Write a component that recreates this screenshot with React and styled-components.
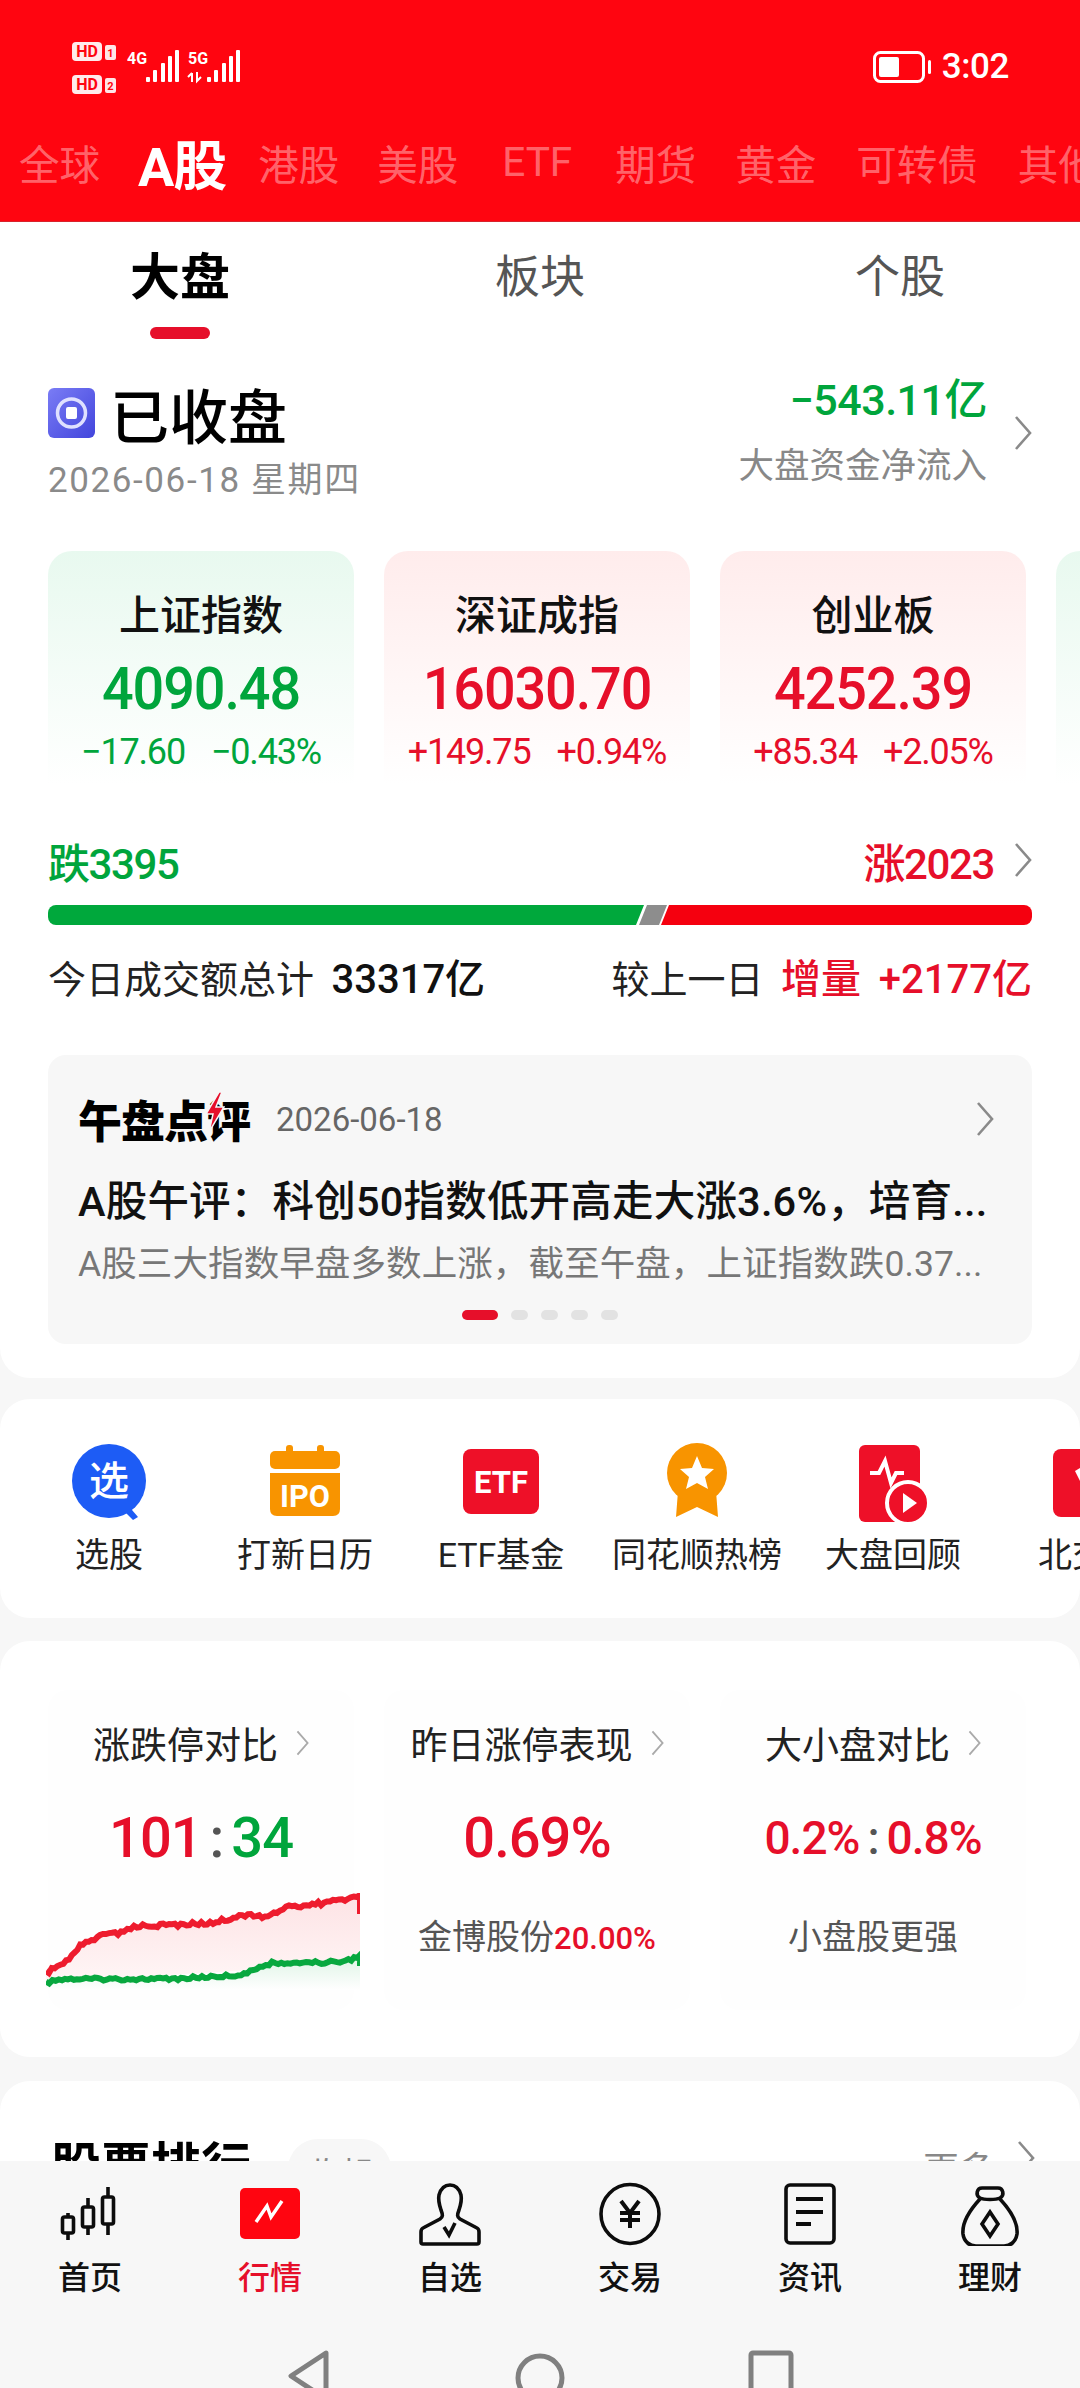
import React from "react";
import styled, { createGlobalStyle } from "styled-components";

const RED = "#e60f2a";
const GREEN = "#00a53c";
const BRIGHT = "#ff0510";
const BG = "#f7f7f7";

const GlobalStyle = createGlobalStyle`
  html, body {
    margin: 0;
    padding: 0;
    background: ${BG};
  }
  * {
    box-sizing: border-box;
  }
  body {
    font-family: Roboto, "Noto Sans CJK SC", sans-serif;
    color: #111;
  }
`;

const Page = styled.div`
  width: 1080px;
  height: 2388px;
  display: flex;
  flex-direction: column;
  overflow: hidden;
  background: ${BG};
`;
const Header = styled.header`
  height: 222px;
  flex: none;
  background: ${BRIGHT};
  border-bottom: 1px solid #d8232c;
  color: #fff;
`;
const StatusBar = styled.div`
  height: 122px;
  padding: 36px 71px 0 70px;
  display: flex;
  justify-content: space-between;
  align-items: flex-start;
`;
const StatusRight = styled.div`
  display: flex;
  align-items: center;
  gap: 9px;
  margin-top: 12px;
`;
const Clock = styled.span`
  font-size: 35px;
  line-height: 38px;
  font-weight: 500;
  letter-spacing: -0.4px;
`;
const MarketTabs = styled.nav`
  height: 80px;
  padding-left: 19px;
  display: flex;
  align-items: center;
  white-space: nowrap;
  overflow: hidden;
`;
const MarketTab = styled.span`
  flex: none;
  margin-right: ${(p) => p.$gap}px;
  font-size: ${(p) => (p.$active ? "54px" : "40.5px")};
  font-weight: ${(p) => (p.$active ? 700 : 400)};
  letter-spacing: ${(p) => (p.$active ? "-1px" : "0")};
  color: ${(p) => (p.$active ? "#fff" : "rgba(255,255,255,0.4)")};
`;

const Scroll = styled.main`
  flex: 1;
  min-height: 0;
  overflow: hidden;
`;
const Panel = styled.section`
  background: #fff;
  border-radius: ${(p) => (p.$top ? "0 0 30px 30px" : "30px")};
  margin-bottom: ${(p) => p.$after || 0}px;
  overflow: hidden;
`;
const SubTabs = styled.div`
  display: flex;
`;
const SubTab = styled.div`
  flex: 1;
  height: 117px;
  padding-top: 31px;
  display: flex;
  flex-direction: column;
  align-items: center;
  font-size: ${(p) => (p.$active ? "50px" : "45px")};
  line-height: 50px;
  font-weight: ${(p) => (p.$active ? 700 : 400)};
  color: ${(p) => (p.$active ? "#000" : "#555")};
`;
const SubMark = styled.i`
  width: 60px;
  height: 12px;
  margin-top: 24px;
  border-radius: 6px;
  background: ${RED};
`;
const Summary = styled.div`
  margin-top: 36px;
  padding: 0 48px;
  display: flex;
  justify-content: space-between;
  align-items: flex-start;
`;
const SummaryLeft = styled.div`
  display: flex;
  flex-direction: column;
`;
const ClosedRow = styled.div`
  height: 76px;
  display: flex;
  align-items: center;
  gap: 15px;
  font-size: 59px;
  font-weight: 500;
  color: #000;
`;
const DateLine = styled.div`
  height: 60px;
  line-height: 60px;
  font-size: 35px;
  letter-spacing: 1.6px;
  color: #8a8a8a;
`;
const SummaryRight = styled.div`
  display: flex;
  align-items: center;
  gap: 27px;
`;
const FlowTexts = styled.div`
  text-align: right;
  height: 116px;
`;
const FlowValue = styled.div`
  font-size: 43px;
  line-height: 50px;
  font-weight: 500;
  letter-spacing: -0.5px;
  color: ${GREEN};
`;
const FlowLabel = styled.div`
  margin-top: 16px;
  font-size: 35.5px;
  line-height: 50px;
  color: #888;
`;
const Chevron = styled.svg`
  flex: none;
  display: block;
  fill: none;
  stroke: ${(p) => p.$color || "#8a8a8a"};
  stroke-width: 2.6;
`;
const CardRow = styled.div`
  margin-top: 40px;
  padding-left: 48px;
  display: flex;
  gap: 30px;
  overflow: hidden;
`;
const IndexCard = styled.div`
  flex: none;
  width: 306px;
  height: 249px;
  padding-top: 40px;
  border-radius: 24px 24px 0 0;
  text-align: center;
  background: linear-gradient(
    ${(p) => (p.$up ? "#ffecec" : "#e8f9ef")} 0%,
    #ffffff 94%
  );
`;
const IndexName = styled.div`
  font-size: 41px;
  line-height: 50px;
  font-weight: 500;
  color: #111;
`;
const IndexValue = styled.div`
  margin-top: 13px;
  font-size: 60px;
  line-height: 70px;
  font-weight: 500;
  letter-spacing: -1.2px;
  transform: scaleX(0.93);
  color: ${(p) => (p.$up ? RED : GREEN)};
`;
const IndexChange = styled.div`
  margin-top: 8px;
  display: flex;
  justify-content: center;
  gap: 26px;
  font-size: 36px;
  line-height: 40px;
  letter-spacing: -1.2px;
  color: ${(p) => (p.$up ? RED : GREEN)};
`;
const Breadth = styled.div`
  margin-top: 35px;
  padding: 0 48px;
  height: 50px;
  display: flex;
  justify-content: space-between;
  align-items: center;
  font-size: 42px;
  font-weight: 500;
  letter-spacing: -1.4px;
`;
const BreadthRight = styled.div`
  display: flex;
  align-items: center;
  gap: 20px;
`;
const Tone = styled.span`
  color: ${(p) => (p.$up ? RED : GREEN)};
`;
const Bar = styled.div`
  margin: 20px 48px 0;
  height: 20px;
  display: flex;
`;
const BarFall = styled.div`
  width: 596px;
  background: #00a83c;
  border-radius: 8px 0 0 8px;
  clip-path: polygon(0 0, 100% 0, calc(100% - 8px) 100%, 0 100%);
`;
const BarFlat = styled.div`
  width: 28px;
  margin-left: -5px;
  background: #8d8d8d;
  clip-path: polygon(8px 0, 100% 0, calc(100% - 8px) 100%, 0 100%);
`;
const BarRise = styled.div`
  flex: 1;
  margin-left: -6px;
  background: #f5000f;
  border-radius: 0 8px 8px 0;
  clip-path: polygon(8px 0, 100% 0, 100% 100%, 0 100%);
`;
const Turnover = styled.div`
  margin-top: 26px;
  padding: 0 48px;
  height: 50px;
  display: flex;
  justify-content: space-between;
  align-items: center;
  font-size: 38px;
  word-spacing: 8px;
  color: #222;
  white-space: nowrap;
`;
const Strong = styled.b`
  font-size: 40px;
  font-weight: 500;
  color: ${(p) => (p.$up ? RED : "#111")};
`;
const NewsCard = styled.div`
  margin: 54px 48px 34px;
  height: 289px;
  padding: 40px 38px 0 30px;
  border-radius: 18px;
  background: ${BG};
`;
const NewsTop = styled.div`
  height: 48px;
  display: flex;
  align-items: center;
`;
const NewsLogo = styled.span`
  position: relative;
  font-size: 44px;
  font-weight: 900;
  letter-spacing: -1px;
  color: #000;
`;
const Bolt = styled.svg`
  position: absolute;
  left: 127px;
  top: 5px;
`;
const NewsDate = styled.span`
  margin-left: 26px;
  font-size: 33px;
  color: #666;
  flex: 1;
`;
const NewsTitle = styled.div`
  margin-top: 31px;
  font-size: 41.5px;
  line-height: 56px;
  font-weight: 500;
  color: #111;
  white-space: nowrap;
  letter-spacing: 0.2px;
`;
const NewsBody = styled.div`
  margin-top: 9px;
  font-size: 35.5px;
  line-height: 50px;
  letter-spacing: 0.1px;
  color: #777;
  white-space: nowrap;
`;
const Dots = styled.div`
  margin-top: 21px;
  display: flex;
  justify-content: center;
  gap: 13px;
  padding-left: 8px;
`;
const Dot = styled.i`
  width: ${(p) => (p.$on ? "36px" : "17px")};
  height: 10px;
  border-radius: 5px;
  background: ${(p) => (p.$on ? RED : "#e2e2e2")};
`;
const ShortcutPanel = styled(Panel)`
  height: 219px;
  padding: 44px 0 0 11px;
  display: flex;
`;
const Shortcut = styled.div`
  flex: none;
  width: 196px;
  display: flex;
  flex-direction: column;
  align-items: center;
`;
const ShortcutIcon = styled.svg`
  display: block;
  height: 80px;
  width: 90px;
`;
const ShortcutLabel = styled.div`
  margin-top: 10px;
  font-size: 34px;
  line-height: 44px;
  color: #222;
  white-space: nowrap;
`;
const StatsPanel = styled(Panel)`
  height: 416px;
  padding: 49px 0 0 48px;
  display: flex;
  gap: 30px;
`;
const StatCol = styled.div`
  flex: none;
  width: 306px;
  height: 320px;
  padding-top: 28px;
  display: flex;
  flex-direction: column;
  align-items: center;
  background: #fefefe;
  border-radius: 20px;
`;
const StatTitle = styled.div`
  height: 50px;
  display: flex;
  align-items: center;
  gap: 18px;
  font-size: 37px;
  color: #222;
  white-space: nowrap;
`;
const StatValue = styled.div`
  margin-top: 35px;
  height: 70px;
  display: flex;
  align-items: center;
  gap: 8px;
  font-size: ${(p) => p.$size || 56}px;
  font-weight: 500;
  letter-spacing: -1px;
  color: ${RED};
  white-space: nowrap;
`;
const Colon = styled.span`
  color: #555;
`;
const StatNote = styled.div`
  margin-top: 39px;
  font-size: 34px;
  line-height: 50px;
  color: #555;
  white-space: nowrap;
`;
const StatNoteValue = styled.span`
  font-size: 31px;
  font-weight: 500;
  color: ${RED};
`;
const ChartSvg = styled.svg`
  display: block;
  flex: none;
  margin: 20px 0 0 4px;
`;
const RankHead = styled.div`
  padding: 56px 45px 0 51px;
  display: flex;
  align-items: flex-start;
  height: 160px;
`;
const RankTitle = styled.div`
  font-size: 50px;
  line-height: 60px;
  font-weight: 700;
  color: #000;
`;
const Collapse = styled.div`
  margin-left: 37px;
  width: 103px;
  height: 60px;
  border-radius: 30px;
  background: ${BG};
  text-align: center;
  font-size: 34px;
  line-height: 60px;
  margin-top: 2px;
  padding-top: 6px;
  color: #888;
`;
const More = styled.div`
  margin-left: auto;
  display: flex;
  gap: 22px;
  font-size: 36px;
  line-height: 60px;
  padding-top: 4px;
  color: #888;
`;
const TabBar = styled.footer`
  flex: none;
  height: 227px;
  background: ${BG};
  padding-top: 21px;
`;
const Tabs = styled.div`
  display: flex;
`;
const Tab = styled.div`
  flex: 1;
  display: flex;
  flex-direction: column;
  align-items: center;
`;
const TabIcon = styled.svg`
  display: block;
  width: 64px;
  height: 64px;
  fill: none;
  stroke: #0c0c0c;
  stroke-width: 3.6;
`;
const TabLabel = styled.div`
  margin-top: 10px;
  font-size: 32px;
  line-height: 44px;
  font-weight: 500;
  color: ${(p) => (p.$active ? RED : "#111")};
`;
const SystemNav = styled.div`
  margin-top: 50px;
  height: 38px;
  overflow: hidden;
  display: flex;
  justify-content: center;
`;
const SystemKey = styled.div`
  width: 231px;
  display: flex;
  justify-content: center;
`;
const KeySvg = styled.svg`
  display: block;
  flex: none;
  fill: none;
  stroke: #808080;
  stroke-width: 5;
`;

// small helpers
const Arrow = ({ w = 18, h = 34, color }) => (
  <Chevron $color={color} width={w} height={h} viewBox="0 0 18 34">
    <path d="M2 1 L16 17 L2 33" />
  </Chevron>
);

// fake intraday noise so the lines look like real ticks
const buildLine = (points, amp) => {
  const out = [];
  for (let i = 0; i < points.length - 1; i++) {
    const [x1, y1] = points[i];
    const [x2, y2] = points[i + 1];
    const steps = Math.max(1, Math.round((x2 - x1) / 3));
    for (let s = 0; s < steps; s++) {
      const t = s / steps;
      const n = Math.sin((x1 + s) * 12.9898) * 43758.5453;
      const noise = (n - Math.floor(n) - 0.5) * amp;
      out.push([x1 + (x2 - x1) * t, y1 + (y2 - y1) * t + noise]);
    }
  }
  out.push(points[points.length - 1]);
  return out.map((p) => `${p[0].toFixed(1)} ${p[1].toFixed(1)}`).join(" L");
};
const riseLine = buildLine(
  [[0, 80], [23, 67], [37, 50], [57, 42], [78, 40], [88, 33], [126, 32], [167, 30], [202, 21], [219, 24], [243, 14], [278, 10], [311, 4]],
  4
);
const fallLine = buildLine(
  [[0, 90], [16, 86], [126, 86], [195, 82], [226, 70], [257, 70], [291, 69], [311, 65]],
  3
);

const TrendChart = () => (
  <ChartSvg width="314" height="97" viewBox="0 0 314 97">
    <defs>
      <linearGradient id="riseFill" x1="0" y1="0" x2="0" y2="1">
        <stop offset="0" stopColor="#fde3e5" />
        <stop offset="1" stopColor="#fff6f6" />
      </linearGradient>
      <linearGradient id="fallFill" x1="0" y1="0" x2="0" y2="1">
        <stop offset="0" stopColor="#dff4e6" />
        <stop offset="1" stopColor="#ffffff" />
      </linearGradient>
    </defs>
    <path d={`M${riseLine} L314 4 L314 70 L0 90 Z`} fill="url(#riseFill)" />
    <path d={`M${fallLine} L314 65 L314 97 L0 97 Z`} fill="url(#fallFill)" />
    <path d={`M${riseLine} L314 2 L314 21`} fill="none" stroke="#ee1c2e" strokeWidth="6" />
    <path d={`M${fallLine} L314 62 L314 73`} fill="none" stroke="#08a83f" strokeWidth="6" />
  </ChartSvg>
);

const StatusIcons = () => (
  <svg width="175" height="62" viewBox="0 0 175 62" fontFamily="Roboto, sans-serif" fontWeight="700">
    <rect x="2" y="6" width="30" height="19" rx="4" fill="#fff" opacity="0.92" />
    <text x="17" y="21" fontSize="16" textAnchor="middle" fill={BRIGHT}>HD</text>
    <rect x="35" y="9" width="11" height="15" rx="2" fill="#fff" opacity="0.9" />
    <text x="40.5" y="21" fontSize="11" textAnchor="middle" fill={BRIGHT}>1</text>
    <rect x="2" y="39" width="30" height="19" rx="4" fill="#fff" opacity="0.92" />
    <text x="17" y="54" fontSize="16" textAnchor="middle" fill={BRIGHT}>HD</text>
    <rect x="35" y="42" width="11" height="15" rx="2" fill="#fff" opacity="0.9" />
    <text x="40.5" y="54" fontSize="11" textAnchor="middle" fill={BRIGHT}>2</text>
    <text x="57" y="28" fontSize="16" fill="#fff">4G</text>
    <g fill="#fff">
      <rect x="76" y="41" width="4" height="5" rx="1" />
      <rect x="83" y="34" width="4" height="12" rx="1" />
      <rect x="91" y="27" width="4" height="19" rx="1" />
      <rect x="98" y="20" width="4" height="26" rx="1" />
      <rect x="105" y="14" width="4" height="32" rx="1" />
      <rect x="137" y="41" width="4" height="5" rx="1" />
      <rect x="144" y="34" width="4" height="12" rx="1" />
      <rect x="152" y="27" width="4" height="19" rx="1" />
      <rect x="159" y="20" width="4" height="26" rx="1" />
      <rect x="166" y="14" width="4" height="32" rx="1" />
    </g>
    <text x="118" y="28" fontSize="16" fill="#fff">5G</text>
    <path d="M122 46 V37 M118 41 L122 37 M127 36 V45 L131 41" stroke="#fff" strokeWidth="2" fill="none" />
  </svg>
);

const Battery = () => (
  <svg width="60" height="32" viewBox="0 0 60 32">
    <rect x="1.5" y="1.5" width="49" height="29" rx="6" fill="none" stroke="#fff" strokeWidth="3" />
    <rect x="6" y="6" width="20" height="20" rx="2" fill="#fff" />
    <rect x="55" y="9" width="3" height="14" rx="1.5" fill="#fff" />
  </svg>
);

const ClosedIcon = () => (
  <svg width="47" height="50" viewBox="0 0 47 50">
    <defs>
      <linearGradient id="closedBg" x1="0" y1="0" x2="1" y2="1">
        <stop offset="0" stopColor="#7a7cf5" />
        <stop offset="1" stopColor="#4245dc" />
      </linearGradient>
    </defs>
    <rect width="47" height="50" rx="6" fill="url(#closedBg)" />
    <circle cx="23.5" cy="25" r="14" fill="none" stroke="#dfe0ff" strokeWidth="3.5" />
    <rect x="18" y="19" width="11" height="12" rx="2" fill="#fff" />
  </svg>
);

const icons = {
  pick: (
    <>
      <path d="M62 60 L74 74 L69 77 L56 64 Z" fill="#1d5cf5" />
      <ellipse cx="45" cy="38" rx="37" ry="37" fill="#1d5cf5" />
      <text x="45" y="52" fontSize="40" fontWeight="500" textAnchor="middle" fill="#fff" fontFamily="Noto Sans CJK SC">选</text>
    </>
  ),
  ipo: (
    <>
      <rect x="10" y="8" width="70" height="18" rx="5" fill="#f89400" />
      <rect x="26" y="2" width="7" height="10" rx="3" fill="#f89400" />
      <rect x="57" y="2" width="7" height="10" rx="3" fill="#f89400" />
      <path d="M10 30 H80 V66 Q80 73 73 73 H17 Q10 73 10 66 Z" fill="#f89400" />
      <text x="45" y="64" fontSize="31" fontWeight="700" textAnchor="middle" fill="#fff" fontFamily="Roboto" textLength="50" lengthAdjust="spacingAndGlyphs">IPO</text>
    </>
  ),
  etf: (
    <>
      <rect x="7" y="6" width="76" height="65" rx="8" fill="#ee1028" />
      <text x="45" y="50" fontSize="32" fontWeight="700" textAnchor="middle" fill="#fff" fontFamily="Roboto" textLength="54" lengthAdjust="spacingAndGlyphs">ETF</text>
    </>
  ),
  medal: (
    <>
      <path d="M26 48 L24 74 L45 64 L66 74 L64 48 Z" fill="#f89400" />
      <circle cx="45" cy="30" r="30" fill="#f89400" />
      <path d="M45 13 L50 25 L62 26 L53 34 L56 46 L45 40 L34 46 L37 34 L28 26 L40 25 Z" fill="#fff" />
    </>
  ),
  review: (
    <>
      <rect x="11" y="2" width="61" height="77" rx="6" fill="#ee1028" />
      <path d="M22 30 H31 L37 18 L43 40 L48 30 H56" fill="none" stroke="#fff" strokeWidth="4" />
      <circle cx="60" cy="60" r="21" fill="#ee1028" stroke="#fff" strokeWidth="4" />
      <path d="M55 50 L69 60 L55 70 Z" fill="#fff" />
    </>
  ),
  north: (
    <>
      <rect x="9" y="6" width="76" height="68" rx="8" fill="#ee1028" />
      <path d="M31 28 L47 18 L63 28 L47 60 Z" fill="#fff" />
      <path d="M33 40 H63" stroke="#ee1028" strokeWidth="3" />
    </>
  ),
};

const shortcuts = [
  { key: "pick", label: "选股" },
  { key: "ipo", label: "打新日历" },
  { key: "etf", label: "ETF基金" },
  { key: "medal", label: "同花顺热榜" },
  { key: "review", label: "大盘回顾" },
  { key: "north", label: "北交所" },
];

const marketTabs = [
  { name: "全球", gap: 38 },
  { name: "A股", gap: 32, active: true },
  { name: "港股", gap: 38 },
  { name: "美股", gap: 44 },
  { name: "ETF", gap: 43 },
  { name: "期货", gap: 39 },
  { name: "黄金", gap: 40 },
  { name: "可转债", gap: 40 },
  { name: "其他", gap: 40 },
];

const indexes = [
  { name: "上证指数", value: "4090.48", diff: "−17.60", pct: "−0.43%" },
  { name: "深证成指", value: "16030.70", diff: "+149.75", pct: "+0.94%", up: true },
  { name: "创业板", value: "4252.39", diff: "+85.34", pct: "+2.05%", up: true },
];

const bottomTabs = [
  {
    label: "首页",
    icon: (
      <>
        <path d="M10 31 V58 M30 16 V53 M50 5 V53" />
        <rect x="4.5" y="35" width="11" height="16" rx="2" fill={BG} />
        <rect x="24.5" y="25" width="11" height="20" rx="2" fill={BG} />
        <rect x="44.5" y="15" width="11" height="27" rx="2" fill={BG} />
      </>
    ),
  },
  {
    label: "行情",
    active: true,
    icon: (
      <>
        <rect x="2" y="6" width="60" height="51" rx="5" fill="#ff0510" stroke="none" />
        <path d="M18 40 L29 24 L33 35 L44 19" stroke="#fff" strokeWidth="3.4" />
      </>
    ),
  },
  {
    label: "自选",
    icon: (
      <>
        <path d="M23 28 C21 22 20 18 21 13 C23 6 27 3 32 3 C37 3 41 6 43 13 C44 18 43 22 41 28 C39 33 39 35 42 37 L59 46 Q61 47 61 50 V60 Q61 62 59 62 H5 Q3 62 3 60 V50 Q3 47 5 46 L22 37 C25 35 25 33 23 28 Z" />
        <path d="M26 45 L31 53 L37 41" />
      </>
    ),
  },
  {
    label: "交易",
    icon: (
      <>
        <ellipse cx="32" cy="32" rx="29" ry="29.5" />
        <path d="M23 19 L32 31 L41 19 M32 31 V46 M22 31 H42 M22 38 H42" strokeWidth="4" />
      </>
    ),
  },
  {
    label: "资讯",
    icon: (
      <>
        <rect x="8" y="3" width="48" height="58" rx="4" />
        <path d="M18 17 H45 M18 30 H45 M18 42 H33" strokeWidth="4" />
      </>
    ),
  },
  {
    label: "理财",
    icon: (
      <>
        <path d="M22 16 C17 13 19 6 24 6 H40 C45 6 47 13 42 16 C38 18 26 18 22 16 Z" />
        <path d="M22 17 C10 30 4 42 5 52 C6 60 12 64 18 64 H46 C52 64 58 60 59 52 C60 42 54 30 42 17" />
        <path d="M32 30 L40 42 L32 54 L24 42 Z" />
      </>
    ),
  },
];

const App = () => {
  return (
    <Page>
      <GlobalStyle />
      <Header>
        <StatusBar>
          <StatusIcons />
          <StatusRight>
            <Battery />
            <Clock>3:02</Clock>
          </StatusRight>
        </StatusBar>
        <MarketTabs>
          {marketTabs.map((t) => (
            <MarketTab key={t.name} $active={t.active} $gap={t.gap}>
              {t.name}
            </MarketTab>
          ))}
        </MarketTabs>
      </Header>

      <Scroll>
        <Panel $top $after={21}>
          <SubTabs>
            <SubTab $active>
              大盘
              <SubMark />
            </SubTab>
            <SubTab>板块</SubTab>
            <SubTab>个股</SubTab>
          </SubTabs>

          <Summary>
            <SummaryLeft>
              <ClosedRow>
                <ClosedIcon />
                已收盘
              </ClosedRow>
              <DateLine>2026-06-18 星期四</DateLine>
            </SummaryLeft>
            <SummaryRight>
              <FlowTexts>
                <FlowValue>−543.11亿</FlowValue>
                <FlowLabel>大盘资金净流入</FlowLabel>
              </FlowTexts>
              <Arrow />
            </SummaryRight>
          </Summary>

          <CardRow>
            {indexes.map((c) => (
              <IndexCard key={c.name} $up={c.up}>
                <IndexName>{c.name}</IndexName>
                <IndexValue $up={c.up}>{c.value}</IndexValue>
                <IndexChange $up={c.up}>
                  <span>{c.diff}</span>
                  <span>{c.pct}</span>
                </IndexChange>
              </IndexCard>
            ))}
            <IndexCard />
          </CardRow>

          <Breadth>
            <Tone>跌3395</Tone>
            <BreadthRight>
              <Tone $up>涨2023</Tone>
              <Arrow />
            </BreadthRight>
          </Breadth>
          <Bar>
            <BarFall />
            <BarFlat />
            <BarRise />
          </Bar>
          <Turnover>
            <span>
              今日成交额总计 <Strong>33317亿</Strong>
            </span>
            <span>
              较上一日 <Strong $up>增量 +2177亿</Strong>
            </span>
          </Turnover>

          <NewsCard>
            <NewsTop>
              <NewsLogo>
                午盘点评
                <Bolt width="20" height="40" viewBox="0 0 20 40">
                  <path d="M14 0 L1 22 H8 L4 40 L19 15 H11 L17 0 Z" fill={RED} stroke={BG} strokeWidth="1.5" />
                </Bolt>
              </NewsLogo>
              <NewsDate>2026-06-18</NewsDate>
              <Arrow />
            </NewsTop>
            <NewsTitle>A股午评：科创50指数低开高走大涨3.6%，培育...</NewsTitle>
            <NewsBody>A股三大指数早盘多数上涨，截至午盘，上证指数跌0.37...</NewsBody>
            <Dots>
              <Dot $on />
              <Dot />
              <Dot />
              <Dot />
              <Dot />
            </Dots>
          </NewsCard>
        </Panel>

        <ShortcutPanel $after={23}>
          {shortcuts.map((s) => (
            <Shortcut key={s.key}>
              <ShortcutIcon viewBox="0 0 90 80">{icons[s.key]}</ShortcutIcon>
              <ShortcutLabel>{s.label}</ShortcutLabel>
            </Shortcut>
          ))}
        </ShortcutPanel>

        <StatsPanel $after={24}>
          <StatCol>
            <StatTitle>
              涨跌停对比
              <Arrow w={13} h={26} color="#aaa" />
            </StatTitle>
            <StatValue>
              <span>101</span>
              <Colon>:</Colon>
              <Tone>34</Tone>
            </StatValue>
            <TrendChart />
          </StatCol>
          <StatCol>
            <StatTitle>
              昨日涨停表现
              <Arrow w={13} h={26} color="#aaa" />
            </StatTitle>
            <StatValue>0.69%</StatValue>
            <StatNote>
              金博股份<StatNoteValue>20.00%</StatNoteValue>
            </StatNote>
          </StatCol>
          <StatCol>
            <StatTitle>
              大小盘对比
              <Arrow w={13} h={26} color="#aaa" />
            </StatTitle>
            <StatValue $size={46}>
              <span>0.2%</span>
              <Colon>:</Colon>
              <span>0.8%</span>
            </StatValue>
            <StatNote>小盘股更强</StatNote>
          </StatCol>
        </StatsPanel>

        <Panel>
          <RankHead>
            <RankTitle>股票排行</RankTitle>
            <Collapse>收起</Collapse>
            <More>
              更多
              <Arrow />
            </More>
          </RankHead>
        </Panel>
      </Scroll>

      <TabBar>
        <Tabs>
          {bottomTabs.map((t) => (
            <Tab key={t.label}>
              <TabIcon viewBox="0 0 64 64">{t.icon}</TabIcon>
              <TabLabel $active={t.active}>{t.label}</TabLabel>
            </Tab>
          ))}
        </Tabs>
        <SystemNav>
          <SystemKey>
            <KeySvg width="44" height="60" viewBox="0 0 44 60">
              <path d="M39 3 L4 26 L39 49 Z" strokeLinejoin="round" />
            </KeySvg>
          </SystemKey>
          <SystemKey>
            <KeySvg width="50" height="60" viewBox="0 0 50 60">
              <circle cx="25" cy="28" r="22" />
            </KeySvg>
          </SystemKey>
          <SystemKey>
            <KeySvg width="46" height="60" viewBox="0 0 46 60">
              <rect x="3" y="3" width="40" height="50" rx="2" />
            </KeySvg>
          </SystemKey>
        </SystemNav>
      </TabBar>
    </Page>
  );
};

export default App;
